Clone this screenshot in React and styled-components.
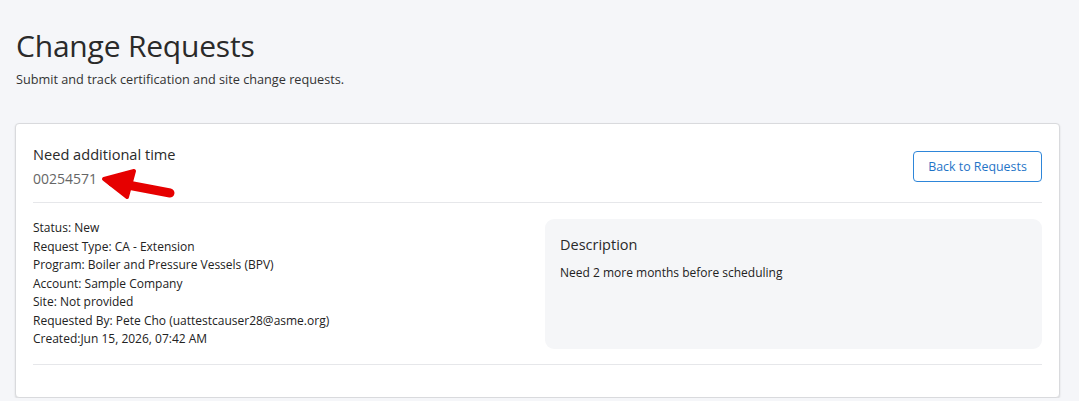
import React from "react";
import styled, { createGlobalStyle } from "styled-components";

const GlobalStyle = createGlobalStyle`
  html, body {
    margin: 0;
    padding: 0;
    background: #f5f6f9;
    font-family: "Open Sans", "Liberation Sans", sans-serif;
    color: #2b2b2b;
  }
`;

const Page = styled.main`
  padding: 26px 19px 0 15px;
`;

const PageHeader = styled.header`
  padding-left: 1px;
  margin-bottom: 35px;
`;

const Title = styled.h1`
  margin: 0;
  font-size: 30px;
  line-height: 40px;
  font-weight: 400;
  color: #2a2a2a;
  letter-spacing: -0.2px;
`;

const Subtitle = styled.p`
  margin: 4px 0 0;
  font-size: 12.7px;
  line-height: 18px;
  color: #333;
`;

const Card = styled.section`
  position: relative;
  background: #fff;
  border: 1px solid #d9dadd;
  border-radius: 4px;
  box-shadow: 0 1px 2px rgba(0, 0, 0, 0.12);
  padding: 18px 17px 34px 17px;
  height: 275px;
  box-sizing: border-box;
`;

const CardHeader = styled.div`
  display: flex;
  justify-content: space-between;
  align-items: flex-start;
  padding-bottom: 14px;
  border-bottom: 1px solid #e6e7ea;
`;

const RequestTitle = styled.h2`
  margin: 2px 0 0;
  font-size: 14.6px;
  line-height: 20px;
  font-weight: 400;
  color: #2a2a2a;
`;

const RequestNumber = styled.div`
  margin-top: 6px;
  font-size: 14px;
  line-height: 18px;
  color: #666;
`;

const OutlineButton = styled.button`
  margin-top: 9px;
  width: 129px;
  height: 31px;
  background: #fff;
  border: 1px solid #2e86d9;
  border-radius: 4px;
  color: #1f74c7;
  font-family: inherit;
  font-size: 12.4px;
  cursor: pointer;
`;

const CardBody = styled.div`
  display: grid;
  grid-template-columns: 1fr 497px;
  column-gap: 16px;
  padding: 16px 0 15px;
  border-bottom: 1px solid #e6e7ea;
`;

const DetailList = styled.ul`
  list-style: none;
  margin: 0;
  padding: 0;
  font-size: 12px;
  line-height: 18.5px;
  color: #222;
`;

const DescriptionPanel = styled.div`
  background: #f5f6f8;
  border-radius: 9px;
  padding: 16px 15px;
  height: 130px;
  box-sizing: border-box;
`;

const PanelTitle = styled.h3`
  margin: 0;
  font-size: 14.5px;
  line-height: 20px;
  font-weight: 400;
  color: #2a2a2a;
`;

const PanelText = styled.p`
  margin: 10px 0 0;
  font-size: 12px;
  line-height: 16px;
  color: #222;
`;

/* red pointer drawn over the card, coordinates in page space */
const Annotation = styled.svg`
  position: absolute;
  left: 64px;
  top: 39px;
  pointer-events: none;
  overflow: visible;
`;

const details = [
  "Status: New",
  "Request Type: CA - Extension",
  "Program: Boiler and Pressure Vessels (BPV)",
  "Account: Sample Company",
  "Site: Not provided",
  "Requested By: Pete Cho (uattestcauser28@asme.org)",
  "Created:Jun 15, 2026, 07:42 AM",
];

export default function App() {
  return (
    <>
      <GlobalStyle />
      <Page>
        <PageHeader>
          <Title>Change Requests</Title>
          <Subtitle>Submit and track certification and site change requests.</Subtitle>
        </PageHeader>
        <Card>
          <CardHeader>
            <div>
              <RequestTitle>Need additional time</RequestTitle>
              <RequestNumber>00254571</RequestNumber>
            </div>
            <OutlineButton type="button">Back to Requests</OutlineButton>
          </CardHeader>
          <CardBody>
            <DetailList>
              {details.map((d) => (
                <li key={d}>{d}</li>
              ))}
            </DetailList>
            <DescriptionPanel>
              <PanelTitle>Description</PanelTitle>
              <PanelText>Need 2 more months before scheduling</PanelText>
            </DescriptionPanel>
          </CardBody>
          <Annotation width="110" height="50" viewBox="0 0 110 50">
            <g
              transform="translate(-80 -164)"
              stroke="#e60000"
              fill="#e60000"
              strokeLinecap="round"
              strokeLinejoin="round"
            >
              <line x1="112" y1="183" x2="170" y2="194" strokeWidth="9" />
              <polygon points="104,180 134,172 127,198" strokeWidth="4" />
            </g>
          </Annotation>
        </Card>
      </Page>
    </>
  );
}
